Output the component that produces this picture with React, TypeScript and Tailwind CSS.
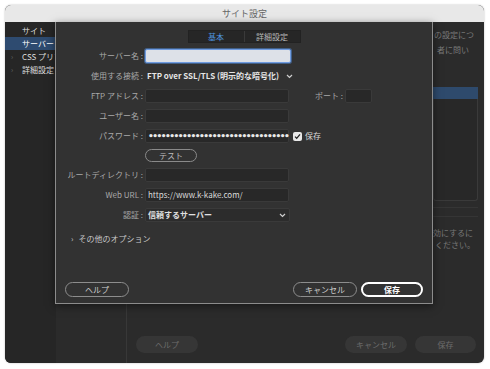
import React from 'react';

const font = { fontFamily: '"Noto Sans CJK JP", "Noto Sans", sans-serif' };

function Row({ label, children }: { label: string; children: React.ReactNode }) {
  return (
    <div className="flex h-[20px] items-center">
      <div className="w-[89px] shrink-0 pr-[2px] text-right text-[8px] text-[#a9a9a9]">{label}</div>
      {children}
    </div>
  );
}

function Field({ children, w = 'w-[144px]' }: { children?: React.ReactNode; w?: string }) {
  return (
    <div className={`${w} flex h-[14px] shrink-0 items-center rounded-[2px] border border-[#3a3a3a] bg-[#282828] px-[2px] text-[8px] text-[#dcdcdc]`}>
      {children}
    </div>
  );
}

function Chevron() {
  return (
    <svg width="7" height="5" viewBox="0 0 7 5" className="ml-auto mr-[3px] shrink-0">
      <path d="M1 1l2.5 2.5L6 1" stroke="#cfcfcf" strokeWidth="1.2" fill="none" />
    </svg>
  );
}

export default function App() {
  return (
    <div className="h-[369px] w-[490px] bg-white p-[5px] pr-[6px]" style={font}>
      <div className="flex h-[358px] flex-col overflow-hidden rounded-[6px] bg-[#2b2b2b] shadow-[0_0_2px_rgba(0,0,0,0.3)]">
        {/* title bar */}
        <div className="flex h-[17px] shrink-0 items-center justify-center bg-[#e8e8e8] text-[9px] text-[#666]">
          サイト設定
        </div>
        <div className="relative flex flex-1">
          {/* sidebar */}
          <div className="w-[51px] shrink-0 bg-[#262626] pt-[2px] text-[8px] text-[#dedede]">
            <div className="flex h-[13px] items-center pl-[17px]">サイト</div>
            <div className="flex h-[13px] items-center bg-[#2e4b70] pl-[17px] text-white">サーバー</div>
            <div className="flex h-[13px] items-center whitespace-nowrap">
              <span className="w-[17px] shrink-0 pl-[6px] text-[7px] text-[#666]">›</span>CSS プリプ
            </div>
            <div className="flex h-[13px] items-center whitespace-nowrap">
              <span className="w-[17px] shrink-0 pl-[6px] text-[7px] text-[#666]">›</span>詳細設定
            </div>
          </div>
          {/* background content */}
          <div className="flex flex-1 flex-col">
            <div className="flex flex-1">
              <div className="flex-1" />
              <div className="w-[51px] shrink-0 pt-[5px] text-[8px] leading-[15px] text-[#7a7a7a]">
                <div className="whitespace-nowrap pl-[1px]">の設定につ</div>
                <div className="whitespace-nowrap pl-[4px]">者に問い</div>
                <div className="mt-[30px] mr-[6px] h-[12px] bg-[#2e4a6c]" />
                <div className="mr-[6px] h-[102px] rounded-b-[3px] border border-t-0 border-[#3a3a3a] bg-[#282828]" />
                <div className="mr-[6px] mt-[6px] h-[10px] border-y border-[#353535]" />
                <div className="mt-[10px] whitespace-nowrap text-[8px] leading-[12px] text-[#777]">効にするに</div>
                <div className="whitespace-nowrap pl-[2px] text-[8px] leading-[12px] text-[#777]">ください。</div>
              </div>
            </div>
            <div className="flex h-[59px] shrink-0">
              <div className="w-[71px] shrink-0 border-r border-[#383838]" />
              <div className="flex flex-1 items-end pb-[10px] pl-[9px] pr-[8px]">
                <div className="flex h-[17px] w-[62px] items-center justify-center rounded-full bg-[#363636] text-[8px] text-[#6c6c6c]">ヘルプ</div>
                <div className="flex-1" />
                <div className="flex h-[17px] w-[62px] items-center justify-center rounded-full bg-[#363636] text-[8px] text-[#6c6c6c]">キャンセル</div>
                <div className="ml-[8px] flex h-[17px] w-[61px] items-center justify-center rounded-full bg-[#363636] text-[8px] text-[#6c6c6c]">保存</div>
              </div>
            </div>
          </div>

          {/* sheet dialog */}
          <div className="absolute left-[50px] top-0 flex h-[282px] w-[378px] flex-col border border-t-0 border-[#8c8c8c] bg-[#323232] shadow-[0_2px_8px_rgba(0,0,0,0.5)]">
            <div className="mt-[8px] flex justify-center">
              <div className="flex h-[13px] border border-[#222] bg-[#262626] text-[8px]">
                <div className="flex w-[56px] items-center justify-center border-r border-[#3a3a3a] text-[#4d93de]">基本</div>
                <div className="flex w-[55px] items-center justify-center text-[#b8b8b8]">詳細設定</div>
              </div>
            </div>
            <div className="mt-[3px] flex flex-col">
              <Row label="サーバー名 :">
                <div className="h-[14px] w-[146px] rounded-[2px] border border-[#6f9be0] bg-[#dde1e8] shadow-[0_0_0_1px_rgba(80,140,220,0.5)]" />
              </Row>
              <Row label="使用する接続 :">
                <div className="flex h-[14px] w-[151px] items-center pl-[2px] text-[8px] font-bold text-[#e6e6e6]">
                  <span className="whitespace-nowrap">FTP over SSL/TLS (明示的な暗号化)</span>
                  <Chevron />
                </div>
              </Row>
              <Row label="FTP アドレス :">
                <Field />
                <div className="w-[56px] pr-[2px] text-right text-[8px] text-[#a9a9a9]">ポート :</div>
                <Field w="w-[27px]" />
              </Row>
              <Row label="ユーザー名 :">
                <Field />
              </Row>
              <Row label="パスワード :">
                <Field>
                  <span className="whitespace-nowrap font-bold text-[9px] leading-none tracking-[-1.5px] text-[#e8e8e8]" style={{ fontFamily: '"DejaVu Sans", sans-serif' }}>
                    •••••••••••••••••••••••••••••••••
                  </span>
                </Field>
                <div className="ml-[4px] flex h-[9px] w-[9px] items-center justify-center rounded-[2px] bg-[#e8e8e8]">
                  <svg width="7" height="7" viewBox="0 0 7 7">
                    <path d="M1 3.6l1.7 1.7L6 1.4" stroke="#222" strokeWidth="1.3" fill="none" />
                  </svg>
                </div>
                <span className="ml-[3px] text-[8px] text-[#d8d8d8]">保存</span>
              </Row>
              <div className="flex h-[19px] items-center pl-[89px]">
                <div className="flex h-[13px] w-[52px] items-center justify-center rounded-full border border-[#8a8a8a] text-[8px] text-[#bdbdbd]">テスト</div>
              </div>
              <Row label="ルートディレクトリ :">
                <Field />
              </Row>
              <Row label="Web URL :">
                <Field>https://www.k-kake.com/</Field>
              </Row>
              <Row label="認証 :">
                <div className="flex h-[14px] w-[145px] items-center rounded-[2px] border border-[#3a3a3a] bg-[#2c2c2c] pl-[2px] text-[8px] font-bold text-[#e0e0e0]">
                  信頼するサーバー
                  <Chevron />
                </div>
              </Row>
            </div>
            <div className="mt-[8px] flex items-center pl-[15px] text-[8px] text-[#c8c8c8]">
              <span className="mr-[5px] text-[8px]">›</span>その他のオプション
            </div>
            <div className="flex-1" />
            <div className="mb-[6px] flex px-[9px]">
              <div className="flex h-[15px] w-[64px] items-center justify-center rounded-full border-[1.5px] border-[#8d8d8d] text-[8px] text-[#cfcfcf]">ヘルプ</div>
              <div className="flex-1" />
              <div className="flex h-[15px] w-[64px] items-center justify-center rounded-full border-[1.5px] border-[#8d8d8d] text-[8px] text-[#cfcfcf]">キャンセル</div>
              <div className="ml-[4px] flex h-[15px] w-[62px] items-center justify-center rounded-full border-2 border-white text-[8px] font-bold text-white">保存</div>
            </div>
          </div>
        </div>
      </div>
    </div>
  );
}
